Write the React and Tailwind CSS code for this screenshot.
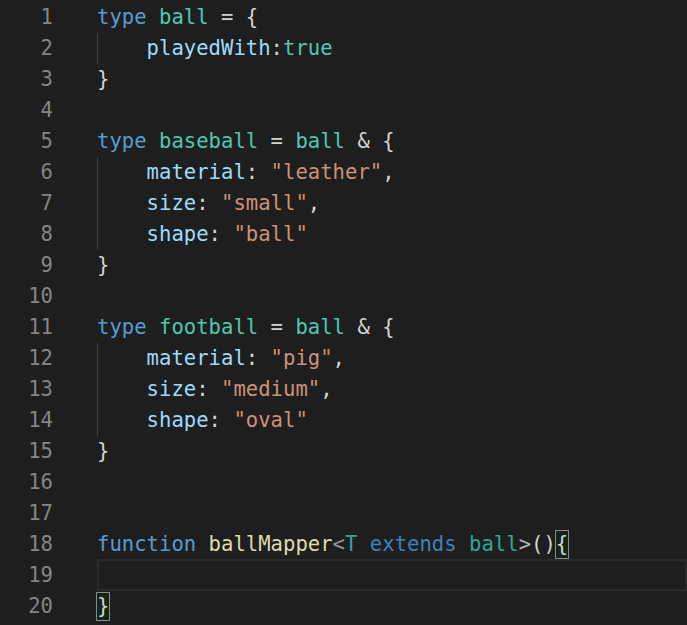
import React from "react";

const K = ({ children }) => <span className="text-[#569cd6]">{children}</span>;
const Ty = ({ children }) => <span className="text-[#4ec9b0]">{children}</span>;
const P = ({ children }) => <span className="text-[#9cdcfe]">{children}</span>;
const S = ({ children }) => <span className="text-[#ce9178]">{children}</span>;
const F = ({ children }) => <span className="text-[#dcdcaa]">{children}</span>;
const Ind = () => (
  <span className="inline-block w-[4ch] shadow-[inset_1px_0_0_#404040] h-full align-top">&nbsp;</span>
);
const Br = ({ children }) => (
  <span className="inline-block align-top mt-px h-[29px] leading-[27px] border border-[#8a8a8a] bg-[#10261a] -mx-px">{children}</span>
);

const lines = [
  <><K>type</K> <Ty>ball</Ty> = {"{"}</>,
  <><Ind /><P>playedWith</P>:<Ty>true</Ty></>,
  <>{"}"}</>,
  <></>,
  <><K>type</K> <Ty>baseball</Ty> = <Ty>ball</Ty> &amp; {"{"}</>,
  <><Ind /><P>material</P>: <S>"leather"</S>,</>,
  <><Ind /><P>size</P>: <S>"small"</S>,</>,
  <><Ind /><P>shape</P>: <S>"ball"</S></>,
  <>{"}"}</>,
  <></>,
  <><K>type</K> <Ty>football</Ty> = <Ty>ball</Ty> &amp; {"{"}</>,
  <><Ind /><P>material</P>: <S>"pig"</S>,</>,
  <><Ind /><P>size</P>: <S>"medium"</S>,</>,
  <><Ind /><P>shape</P>: <S>"oval"</S></>,
  <>{"}"}</>,
  <></>,
  <></>,
  <><K>function</K> <F>ballMapper</F><span className="text-[#8a9a96]">&lt;</span><span className="text-[#2fa893]">T</span> <span className="text-[#3f80bd]">extends</span> <span className="text-[#2fa893]">ball</span><span className="text-[#b4b4b4]">&gt;</span>()<Br>{"{"}</Br></>,
  <></>,
  <><Br>{"}"}</Br></>,
];

export default function App() {
  return (
    <div
      className="w-[687px] h-[625px] bg-[#1e1e1e] overflow-hidden pt-[2px] text-[#d4d4d4] text-[20.6px]"
      style={{ fontFamily: '"DejaVu Sans Mono", "Liberation Mono", monospace' }}
    >
      {lines.map((content, i) => (
        <div key={i} className="flex h-[31px] leading-[31px]">
          <div className="w-[53px] shrink-0 text-right text-[#858585]">{i + 1}</div>
          <div
            className={
              "ml-[44px] flex-1 whitespace-pre " +
              (i === 18 ? "border-2 border-[#2a2a2a] -mt-px" : "")
            }
          >
            {i === 18 ? "" : content}
          </div>
        </div>
      ))}
    </div>
  );
}
